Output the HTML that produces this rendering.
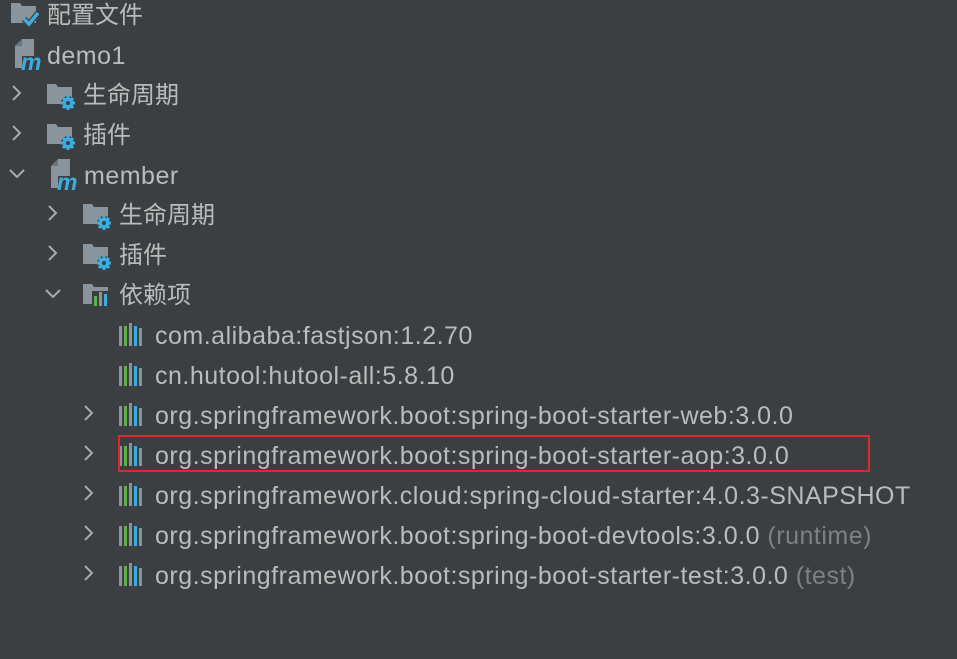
<html><head><style>
body{margin:0;width:957px;height:659px;background:#3c3f41;overflow:hidden;font-family:"Liberation Sans","Noto Sans CJK SC",sans-serif;color:#bbbbbb;font-size:25px;letter-spacing:0.5px}
.r{position:absolute;height:40px;line-height:40px;white-space:nowrap}
.r svg{position:absolute;top:6px;overflow:visible}
.r svg.m{top:2px}
.g{color:#808080}
.c{font-size:24px;letter-spacing:0}
</style></head><body>
<svg width="0" height="0" style="position:absolute">
<defs>
<g id="chr"><path d="M5 4 L12 11 L5 18" stroke="#a9a9a9" stroke-width="2" fill="none"/></g>
<g id="chd"><path d="M2 8 L9 15 L16 8" stroke="#a9a9a9" stroke-width="2" fill="none"/></g>
<g id="fg"><path d="M1 2 h9 l2 3 h14 v17 h-25z" fill="#8a949c"/><circle cx="22" cy="21" r="7" fill="#3c3f41"/><circle cx="22" cy="21" r="5.5" fill="#3aaee0"/><g stroke="#3aaee0" stroke-width="3"><path d="M22 14 v14 M15 21 h14 M17 16 l10 10 M27 16 l-10 10"/></g><circle cx="22" cy="21" r="2" fill="#3c3f41"/></g>
<g id="mv"><path d="M0 8 L7 1 H19 V18 H7 V30 H0 Z" fill="#8a949c"/><path d="M0 8 H7 V1 Z" fill="#6b747b"/><text x="6" y="32" font-size="23" font-style="italic" font-weight="bold" fill="#3aaee0" font-family="Liberation Sans" letter-spacing="0">m</text></g>
<g id="bars"><rect x="0" y="4" width="3" height="20" fill="#8a949c"/><rect x="5" y="4" width="3" height="20" fill="#5fb04a"/><rect x="10" y="1" width="3" height="23" fill="#8a949c"/><rect x="15" y="4" width="3" height="20" fill="#3aaee0"/><rect x="20" y="6" width="3" height="18" fill="#8a949c"/></g>
</defs></svg>

<div class="r" style="top:-4px;left:10px"><svg width="30" height="30"><path d="M1 1 h9 l2 3 h14 v17 h-25z" fill="#8a949c"/><path d="M14 17 l5 5 l9 -11" stroke="#3c3f41" stroke-width="6" fill="none"/><path d="M14 17 l5 5 l9 -11" stroke="#3aaee0" stroke-width="3.5" fill="none"/></svg><span class="c" style="position:absolute;left:37px">配置文件</span></div>
<div class="r" style="top:36px;left:8px"><svg class="m" width="30" height="30" style="left:7px"><use href="#mv"/></svg><span style="position:absolute;left:39px">demo1</span></div>
<div class="r" style="top:76px;left:8px"><svg width="20" height="24"><use href="#chr"/></svg><svg width="32" height="30" style="left:38px"><use href="#fg"/></svg><span class="c" style="position:absolute;left:75px">生命周期</span></div>
<div class="r" style="top:116px;left:8px"><svg width="20" height="24"><use href="#chr"/></svg><svg width="32" height="30" style="left:38px"><use href="#fg"/></svg><span class="c" style="position:absolute;left:75px">插件</span></div>
<div class="r" style="top:156px;left:8px"><svg width="20" height="24"><use href="#chd"/></svg><svg class="m" width="30" height="30" style="left:43px"><use href="#mv"/></svg><span style="position:absolute;left:76px">member</span></div>
<div class="r" style="top:196px;left:44px"><svg width="20" height="24"><use href="#chr"/></svg><svg width="32" height="30" style="left:38px"><use href="#fg"/></svg><span class="c" style="position:absolute;left:75px">生命周期</span></div>
<div class="r" style="top:236px;left:44px"><svg width="20" height="24"><use href="#chr"/></svg><svg width="32" height="30" style="left:38px"><use href="#fg"/></svg><span class="c" style="position:absolute;left:75px">插件</span></div>
<div class="r" style="top:276px;left:44px"><svg width="20" height="24"><use href="#chd"/></svg><svg width="32" height="30" style="left:38px"><path d="M1 2 h9 l2 3 h14 v17 h-25z" fill="#8a949c"/><rect x="10" y="9" width="17" height="15" fill="#3c3f41"/><rect x="12" y="14" width="3" height="10" fill="#5fb04a"/><rect x="17" y="10" width="3" height="14" fill="#8a949c"/><rect x="22" y="12" width="3" height="12" fill="#3aaee0"/></svg><span class="c" style="position:absolute;left:75px">依赖项</span></div>
<div class="r" style="top:316px;left:119px"><svg width="24" height="26"><use href="#bars"/></svg><span style="position:absolute;left:36px">com.alibaba:fastjson:1.2.70</span></div>
<div class="r" style="top:356px;left:119px"><svg width="24" height="26"><use href="#bars"/></svg><span style="position:absolute;left:36px">cn.hutool:hutool-all:5.8.10</span></div>
<div class="r" style="top:396px;left:80px"><svg width="20" height="24"><use href="#chr"/></svg><svg width="24" height="26" style="left:39px"><use href="#bars"/></svg><span style="position:absolute;left:75px">org.springframework.boot:spring-boot-starter-web:3.0.0</span></div>
<div class="r" style="top:436px;left:80px"><svg width="20" height="24"><use href="#chr"/></svg><svg width="24" height="26" style="left:39px"><use href="#bars"/></svg><span style="position:absolute;left:75px">org.springframework.boot:spring-boot-starter-aop:3.0.0</span></div>
<div class="r" style="top:476px;left:80px"><svg width="20" height="24"><use href="#chr"/></svg><svg width="24" height="26" style="left:39px"><use href="#bars"/></svg><span style="position:absolute;left:75px">org.springframework.cloud:spring-cloud-starter:4.0.3-SNAPSHOT</span></div>
<div class="r" style="top:516px;left:80px"><svg width="20" height="24"><use href="#chr"/></svg><svg width="24" height="26" style="left:39px"><use href="#bars"/></svg><span style="position:absolute;left:75px">org.springframework.boot:spring-boot-devtools:3.0.0 <span class="g">(runtime)</span></span></div>
<div class="r" style="top:556px;left:80px"><svg width="20" height="24"><use href="#chr"/></svg><svg width="24" height="26" style="left:39px"><use href="#bars"/></svg><span style="position:absolute;left:75px">org.springframework.boot:spring-boot-starter-test:3.0.0 <span class="g">(test)</span></span></div>
<div style="position:absolute;left:118px;top:435px;width:748px;height:33px;border:2px solid #e0282a"></div>
</body></html>
